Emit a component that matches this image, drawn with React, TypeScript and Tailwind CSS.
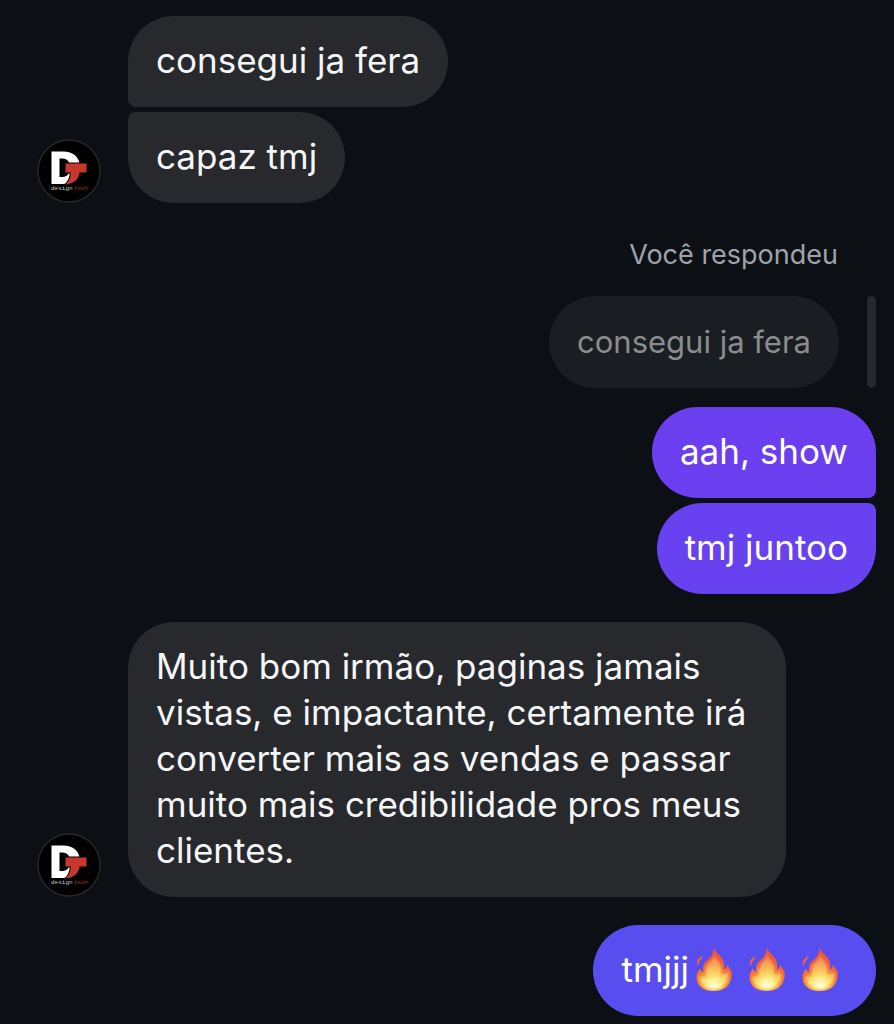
import type { ReactNode } from "react";

function Avatar() {
  return (
    <svg
      viewBox="0 0 64 64"
      className="w-16 h-16 shrink-0"
      role="img"
      aria-label="design tech"
    >
      <circle cx="32" cy="32" r="31" fill="#000000" stroke="#25272b" strokeWidth="1.5" />
      {/* D */}
      <path
        fillRule="evenodd"
        fill="#ffffff"
        d="M14.500 12.500H26C36 12.500 43 18 43 28.500C43 39 36 45 26 45H14.500ZM22.500 19.500V38H25.500C30.500 38 33 34 33 28.500C33 23 30.500 19.500 25.500 19.500Z"
      />
      {/* T */}
      <path
        fill="#c8372d"
        stroke="#000000"
        strokeWidth="2"
        paintOrder="stroke"
        d="M28.500 24.500H49.500V33.500H42.500C41.800 40 37.500 44.500 28.500 45.500C32 42.500 33.600 38.500 33.800 33.500H28.500Z"
      />
      <path fill="#000000" d="M43.500 34.500H47V46H32C38 45 43 41 43.500 34.500Z" />
      <text
        x="14"
        y="50.5"
        fontSize="6"
        fontFamily="Liberation Mono, monospace"
        fill="#c9c9c9"
      >
        design
      </text>
      <text x="37" y="50.5" fontSize="6" fontFamily="Liberation Mono, monospace" fill="#a3332c">
        tech
      </text>
    </svg>
  );
}

function Fire({ id }: { id: string }) {
  return (
    <svg viewBox="0 0 53 46" className="w-[53px] h-[46px]" role="img" aria-label="🔥">
      <defs>
        <radialGradient id={`${id}-outer`} gradientUnits="userSpaceOnUse" cx="25" cy="38" r="38">
          <stop offset="0" stopColor="#ffc54a" />
          <stop offset="0.35" stopColor="#f98a3a" />
          <stop offset="0.6" stopColor="#ee5a38" />
          <stop offset="1" stopColor="#e8553f" />
        </radialGradient>
        <radialGradient id={`${id}-inner`} gradientUnits="userSpaceOnUse" cx="25" cy="40" r="30">
          <stop offset="0" stopColor="#fffff0" />
          <stop offset="0.2" stopColor="#fff49a" />
          <stop offset="0.45" stopColor="#fcd05a" />
          <stop offset="0.7" stopColor="#f7a75a" />
          <stop offset="1" stopColor="#f08a58" />
        </radialGradient>
        <filter id={`${id}-soft`}>
          <feGaussianBlur stdDeviation="1" />
        </filter>
      </defs>
      <path
        fill={`url(#${id}-outer)`}
        d="M25 1C25.500 5 29 7.500 32 11C35 14.500 35.800 18 35 23.500C37 22.500 38 21 38 18.500C40.500 21 40 23 42.500 25C43.500 33 41 45 25 45C11 45 7 37 7.500 29.500C7.800 26.500 9.500 24.500 11 22.500C11.500 24.500 12.500 25.500 14.500 26C13.200 20.500 15 16.500 18.500 14C22.500 11 24.500 6.500 25 1Z"
      />
      <path fill="#e9604a" d="M13.500 10C9.500 12 6.500 15 8.500 20C10 18 9.500 16.500 11.300 14.500C12.700 13 13.300 12 13.500 10Z" />
      <path
        fill={`url(#${id}-inner)`}
        filter={`url(#${id}-soft)`}
        d="M25 9C26.500 13 32 16 32 22C32 25 31 28 33.500 28.500C36 29 38 27 39 26C40 33 37 43.500 25 43.500C14 43.500 10 37 10.500 29.500C12 31 15 31 16.500 29.500C18 27.500 16 23.500 18.500 19C20.500 15.500 24.500 13.500 25 9Z"
      />
    </svg>
  );
}

function Bubble({ className, children }: { className: string; children: ReactNode }) {
  return (
    <div className={`w-fit px-7 pt-[21px] pb-6 text-[35px] leading-[46px] ${className}`}>
      {children}
    </div>
  );
}

export default function App() {
  return (
    <main className="min-h-screen bg-[#0c0f14] pt-4 pb-2 pl-[37px] pr-[18px] font-[Inter,sans-serif] text-[#f5f6f8]">
      {/* Received */}
      <div className="flex items-end gap-[27px]">
        <Avatar />
        <div className="flex flex-col gap-[5px]">
          <Bubble className="rounded-[46px] rounded-bl-lg bg-[#27292d]">consegui ja fera</Bubble>
          <Bubble className="rounded-[46px] rounded-tl-lg bg-[#27292d]">capaz tmj</Bubble>
        </div>
      </div>

      {/* Reply with quoted message */}
      <div className="mt-9 flex flex-col items-end">
        <p className="mr-[38px] text-[27px] leading-8 text-[#a0a3aa]">Você respondeu</p>
        <div className="mt-[25px] flex gap-7">
          <blockquote className="rounded-full bg-[#1a1d21] px-7 py-[23px] text-[31px] leading-[46px] text-[#8a8c8f]">
            consegui ja fera
          </blockquote>
          <div className="w-[9px] rounded-full bg-[#25282c]" />
        </div>
      </div>

      {/* Sent */}
      <div className="mt-[19px] flex flex-col items-end gap-[5px]">
        <Bubble className="rounded-[46px] rounded-br-lg bg-[#6b3ef0] text-white">aah, show</Bubble>
        <Bubble className="rounded-[46px] rounded-tr-lg bg-[#6841f0] text-white">tmj juntoo</Bubble>
      </div>

      <div className="mt-7 flex items-end gap-[27px]">
        <Avatar />
        <Bubble className="max-w-[658px] rounded-[46px] bg-[#27292d]">
          Muito bom irmão, paginas jamais vistas, e impactante, certamente irá converter mais as
          vendas e passar muito mais credibilidade pros meus clientes.
        </Bubble>
      </div>

      <div className="mt-7 flex justify-end">
        <Bubble className="flex rounded-full bg-[#584eef] text-white">
          <span>tmjjj</span>
          <Fire id="fire-1" />
          <Fire id="fire-2" />
          <Fire id="fire-3" />
        </Bubble>
      </div>
    </main>
  );
}
